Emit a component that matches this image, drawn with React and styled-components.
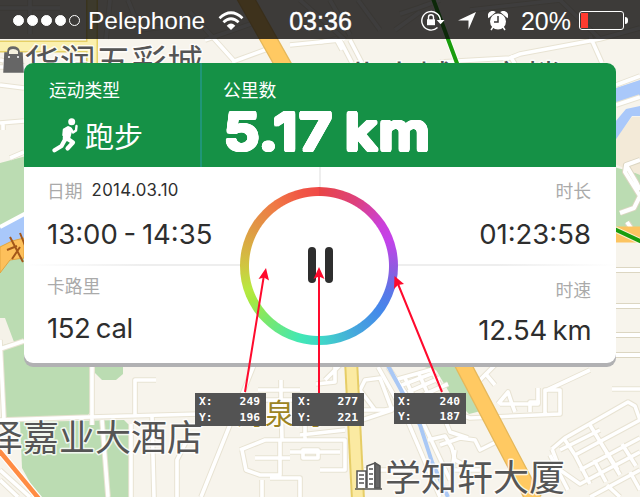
import React from "react";
import styled, { createGlobalStyle } from "styled-components";

const LATIN = `Inter, "Noto Sans CJK SC", sans-serif`;
const CJK = `"Noto Sans CJK SC", sans-serif`;
const IOS = `"Liberation Sans", Arial, sans-serif`;

const GlobalStyle = createGlobalStyle`
  *, *::before, *::after { box-sizing: border-box; }
  html, body { margin: 0; padding: 0; overflow: hidden; }
`;

const Screen = styled.div`
  position: relative;
  isolation: isolate;
  width: 640px;
  height: 497px;
  overflow: hidden;
  background: #f7f4ec;
  font-family: ${LATIN};
  color: #2e2e2e;
`;

const MapCanvas = styled.svg`
  position: absolute;
  inset: 0;
  z-index: -1;
`;

/* ---------- status bar ---------- */

const StatusBar = styled.header`
  display: grid;
  grid-template-columns: 1fr auto 1fr;
  align-items: center;
  height: 39px;
  padding: 2px 12px 0 13px;
  background: rgba(10, 9, 9, 0.79);
  color: #fff;
  font-family: ${IOS};
  font-size: 24.5px;
  line-height: 36px;
`;

const StatusGroup = styled.div`
  display: flex;
  align-items: center;
  justify-content: ${(p) => (p.$end ? "flex-end" : "flex-start")};
`;

const SignalDots = styled.div`
  display: flex;
  gap: 3px;
  margin-right: 8px;
`;

const Dot = styled.i`
  width: 11px;
  height: 11px;
  border-radius: 50%;
  border: 1px solid #fff;
  background: ${(p) => (p.$on ? "#fff" : "transparent")};
`;

const Carrier = styled.span`
  margin-right: 13px;
`;

const Clock = styled.time`
  font-size: 25px;
  -webkit-text-stroke: 0.4px #fff;
`;

const Glyph = styled.svg`
  flex: none;
  margin-right: ${(p) => p.$gap || 0}px;
`;

const Percent = styled.span`
  margin-right: 8px;
  font-size: 25px;
`;

const Battery = styled.div`
  width: 45px;
  height: 19px;
  padding: 1px;
  border: 1px solid #fff;
  border-radius: 3px;
  &::before {
    content: "";
    display: block;
    width: 7px;
    height: 15px;
    background: #ff3b30;
  }
`;

const BatteryCap = styled.i`
  width: 3px;
  height: 7px;
  margin-left: 1px;
  border-radius: 0 4px 4px 0;
  background: #fff;
`;

/* ---------- workout card ---------- */

const Card = styled.main`
  position: relative;
  width: 592px;
  height: 300px;
  margin: 24px auto 0;
  border-radius: 9px;
  background: #fff;
  box-shadow: 0 4px 0 #b1b1b3;
`;

const CardHeader = styled.section`
  display: grid;
  grid-template-columns: 178px 1fr;
  height: 104px;
  border-radius: 9px 9px 0 0;
  background: #159146;
  color: #fff;
`;

const HeaderCell = styled.div`
  padding: 14.5px 0 0 ${(p) => p.$indent}px;
  border-right: ${(p) => (p.$divided ? "2px solid #1f9677" : "0")};
`;

const HeaderLabel = styled.div`
  font: 400 17.8px/22px ${CJK};
`;

const Activity = styled.div`
  display: flex;
  align-items: center;
  margin: 17.5px 0 0 3px;
`;

const ActivityName = styled.span`
  margin-left: 6px;
  font: 400 29px/36px ${CJK};
`;

/* A ring of hard shadows thickens the strokes and rounds their ends. */
const roundShadow = Array.from({ length: 24 }, (_, i) => {
  const a = (i * Math.PI) / 12;
  return `${(Math.cos(a) * 2.1).toFixed(2)}px ${(Math.sin(a) * 2.3).toFixed(2)}px 0 #fff`;
}).join(", ");

const Distance = styled.div`
  width: max-content;
  margin: 1px 0 0 1px;
  font-size: 51px;
  font-weight: 500;
  line-height: 62px;
  white-space: pre;
  word-spacing: -5px;
  letter-spacing: 1.6px;
  text-shadow: ${roundShadow};
  transform: scaleX(1.12);
  transform-origin: 0 50%;
`;

const Stats = styled.section`
  position: relative;
  display: grid;
  grid-template-columns: 1fr 1fr;
  grid-template-rows: 98px 98px;
  background:
    linear-gradient(#eee, #eee) 295px 0 / 2px 100px no-repeat,
    linear-gradient(90deg, #fff, #eee 20%, #eee 80%, #fff) 0 97px / 100% 2px no-repeat;
`;

const Stat = styled.div`
  display: flex;
  flex-direction: column;
  align-items: ${(p) => (p.$right ? "flex-end" : "flex-start")};
  padding: ${(p) => p.$top}px 25px 0 23px;
`;

const StatLabel = styled.div`
  display: flex;
  align-items: center;
  height: 22px;
  color: #aaa;
  font: 400 17.8px/22px ${CJK};
`;

const DateText = styled.span`
  margin-left: 9px;
  color: #2e2e2e;
  font: 400 16.8px/22px ${LATIN};
  letter-spacing: 0.35px;
`;

const StatValue = styled.div`
  margin-top: ${(p) => p.$gap}px;
  font-size: 27.5px;
  line-height: 34px;
  font-weight: 400;
  white-space: nowrap;
  word-spacing: -2px;
  letter-spacing: ${(p) => p.$track || 0}px;
  margin-right: ${(p) => p.$track || 0}px;
`;

const PauseButton = styled.button`
  position: absolute;
  left: 216px;
  top: 20px;
  display: flex;
  align-items: center;
  justify-content: center;
  gap: 9px;
  width: 158px;
  height: 158px;
  padding: 0 0 2px 3px;
  border: 0;
  border-radius: 50%;
  background:
    radial-gradient(circle, #fff 69.5px, transparent 70.5px),
    conic-gradient(#e84545, #dd407e 30deg, #cb40d8 56deg, #c342ea 70deg, #8f5ce0 92deg,
      #5b76e8 110deg, #4488ea 126deg, #45a8dc 152deg, #40d6c8 178deg, #42e8b4 195deg,
      #7ce86a 225deg, #a8e840 244deg, #b8e840 252deg, #d0c640 270deg, #e09845 300deg,
      #f07845 325deg, #f05845 345deg, #f04a48 360deg);
`;

const PauseBar = styled.i`
  width: 8px;
  height: 36px;
  border-radius: 4px;
  background: #2e2e2e;
`;

/* ---------- coordinate notes pinned on the canvas ---------- */

const Arrows = styled.svg`
  position: absolute;
  inset: 0;
`;

const Note = styled.dl`
  position: absolute;
  left: ${(p) => p.$x}px;
  top: 393px;
  display: grid;
  grid-template-columns: 1fr auto;
  width: ${(p) => p.$w}px;
  height: ${(p) => p.$h}px;
  margin: 0;
  padding: 1px 6px 0 ${(p) => p.$pad}px;
  background: #535353;
  color: #fff;
  font: 700 11.3px/15px "DejaVu Sans Mono", monospace;
`;

const NoteKey = styled.dt`
  margin: 0;
`;

const NoteValue = styled.dd`
  margin: 0;
`;

const streets = [
  "M0 8H60M30 0V34M110 0L106 39M128 0L140 30L200 22M190 12L235 62M205 40L262 20M232 62L270 48M0 60L24 66M0 67H5V63",
  "M290 45L340 40L352 63M300 0L345 40M330 0L350 35M358 0L380 30M350 40L362 63M400 14L418 8L440 0M395 30L420 12",
  "M320 42L336 39L342 50M440 62L510 58L520 54L600 39L640 28M590 36L602 63M510 56L515 64M560 0L600 39M470 10L560 0",
  "M0 85L24 88M0 123L24 121M3 124V130M10 158L24 152",
  "M0 349L24 341M0 340L4 420M0 420L90 417L200 414M92 360V425M135 415V380H156",
  "M102 420L108 497M131 424V497M152 416L154 497M177 497V460L188 438M256 360L201 497",
  "M0 470L30 497M0 480L18 497M210 420L245 414",
  "M335 367V382L316 384M340 365L325 380M258 390H300M281 380V400M281 395L282 440M258 400H305",
  "M240 450L265 440H345V470H320M242 450L246 470L260 475H280V440M255 458H290M270 478H300V497M262 497V480M303 450H318V458H303ZM290 452H340",
  "M345 430L300 435M305 425V440M363 410H385L395 408M362 420L392 410L380 378L365 380L360 390L375 410",
  "M378 367L405 415L440 497M388 367L418 412L450 480M364 470H410M398 379L430 370M402 385L436 372M408 392L440 378M412 400L448 384",
  "M405 378L415 400M418 372L428 394M430 368L440 385M428 440L445 436L452 448L455 460L470 468M440 445L460 438L475 440L480 450L496 442",
  "M448 410L470 418L560 414V390H545V415M500 404H538V388M498 404L508 392L512 404L515 412M545 391L590 370M485 373L495 385",
  "M495 365L480 380M530 412V402H540M445 420L450 432L468 438M500 442L512 470M510 445L540 497M455 450L452 470L480 470",
  "M612 389H640M552 449L565 438L628 402L635 406L640 420M552 449L560 470L580 484L640 452M565 440L575 455L590 484M590 425L604 448L618 470",
  "M560 450L600 430M575 455L640 420M580 470L640 438M594 460L606 482M606 452L620 475M622 444L636 466M590 497L640 470M607 485L620 497M630 472L640 490M550 455L568 490",
  "M616 85L640 76M616 105L640 97",
];

const districtRoads = ["M616 270H640", "M616 306H640", "M616 335H640", "M616 355H640", "M640 160L626 165L636 182L640 190M626 165L625 172L640 196L634 208L620 213M627 222L631 228"];

function CityMap() {
  return (
    <MapCanvas width="640" height="497" viewBox="0 0 640 497" aria-hidden="true">
      <g fill="#bbdcb2">
        <path d="M0 163L30 155V345L0 349Z" />
        <path d="M0 350L30 341V360H90V412L86 418L5 420Z" />
        <path d="M95 360H123V374L116 380H102L95 373Z" />
        <path d="M20 422L124 420L130 426V497H38L22 468Z" />
        <path d="M398 360H458L481 411L469 414L452 397L436 370Z" />
        <path d="M610 166L640 174V230H610Z" />
      </g>
      <path d="M0 318H5L14 342L0 346Z" fill="#f5f2e8" />
      <path d="M636 117H632L610 146V162L640 175V117Z" fill="#f3ead8" />
      <path d="M0 228L30 212V236L0 246Z" fill="#a9c8fa" />
      <path d="M610 90L640 80V98L610 104ZM610 128L626 109L640 106V116H632L610 148Z" fill="#a9c8fa" />
      <g fill="none" strokeLinejoin="round">
        {streets.map((d) => <path key={"c" + d} d={d} stroke="#e8e3d3" strokeWidth="5.600" />)}
        {streets.map((d) => <path key={"w" + d} d={d} stroke="#fff" strokeWidth="3.600" />)}
        {districtRoads.map((d) => <path key={"c" + d} d={d} stroke="#dcd6c2" strokeWidth="6" />)}
        {districtRoads.map((d) => <path key={"w" + d} d={d} stroke="#fff" strokeWidth="4" />)}
        <path d="M0 227L30 211" stroke="#fff" strokeWidth="4" />
        <path d="M386 362L420 425L432 462L448 497" stroke="#a9c8f5" strokeWidth="4" />
        <path d="M-2 46.500H92V0V66" stroke="#e6d067" strokeWidth="12" />
        <path d="M-2 46.500H92V0V66" stroke="#fbf0ae" strokeWidth="9" />
        <path d="M351 360L358 500" stroke="#e6cd66" strokeWidth="14" />
        <path d="M351 360L358 500" stroke="#fbeaa2" strokeWidth="10" />
        <path d="M242 -8L286 70M459 357L534 500" stroke="#e5b85b" strokeWidth="17" />
        <path d="M242 -8L286 70M459 357L534 500" stroke="#ffc962" strokeWidth="14.500" />
        <path d="M610 234.500H640" stroke="#fcc460" strokeWidth="16" />
        <path d="M432 -4L458 66M610 227L642 242" stroke="#fff" strokeOpacity="0.7" strokeWidth="6" />
        <path d="M432 -4L458 66M610 227L642 242" stroke="#199d0d" strokeWidth="4" />
        <path d="M-3 448L40 500" stroke="#fff" strokeWidth="7" />
        <path d="M-3 448L40 500" stroke="#ff8c43" strokeWidth="4.500" />
      </g>
      <path d="M0 247L12 241L24 238V258L10 260L0 273Z" fill="#fdc05b" stroke="#e3a33f" />
      <path d="M10 237L23 262M20 233L26 248M7 250L17 246M12 259L20 247" fill="none" stroke="#a3571a" strokeWidth="2" />
      <path d="M5 53H22L23 72H4ZM8 56V51Q8 47 13 47T19 51V56" fill="#666" stroke="#666" strokeWidth="1.500" />
      <path d="M9 54V51Q10 49 13 49T18 51V54Z" fill="#f5f1df" />
      <circle cx="9" cy="57" r="1" fill="#fff" /><circle cx="18" cy="57" r="1" fill="#fff" />
      <g fontFamily={CJK} fontSize="36" fill="#555" stroke="#fff" strokeOpacity="0.8" strokeWidth="3" paintOrder="stroke" strokeLinejoin="round">
        <text x="24" y="75.500" fontSize="35.800">华润五彩城</text>
        <text x="345" y="92">北小城工字楼</text>
        <text x="-13" y="451">泽嘉业大酒店</text>
        <text x="385" y="491">学知轩大厦</text>
        <text x="236" y="425" fontSize="29" fill="#9c8423">海泉湾</text>
      </g>
      <g stroke="#555" strokeWidth="1.500">
        <path d="M355 489H382M357 488V471H366V488M367 488V466L375 463V488" fill="#fff" />
        <path d="M375 463L380 466V488H375Z" fill="#666" />
        <path d="M359 475H364M359 479H364M359 483H364M369 469H373M369 474H373M369 479H373M369 484H373" />
      </g>
    </MapCanvas>
  );
}

function WifiIcon() {
  return (
    <Glyph width="26" height="20" viewBox="0 0 26 20" fill="none" stroke="#fff" strokeWidth="2.700">
      <path d="M1.500 7.200Q13 -3.700 24.500 7.200" />
      <path d="M5.400 11.300Q13 4.200 20.600 11.300" />
      <path d="M8.700 14.700Q13 10.300 17.300 14.700L13 19Z" fill="#fff" stroke="none" />
    </Glyph>
  );
}

function LockIcon() {
  return (
    <Glyph $gap={13} width="24" height="21" viewBox="0 0 24 21" fill="none" stroke="#fff">
      <path d="M16.500 17.600A9.300 9.300 0 1 1 19.400 10.500" strokeWidth="1.400" />
      <path d="M15.700 10H23.500L19.600 14.300Z" fill="#fff" stroke="none" />
      <path d="M6 9.300H14V15.200H6Z" fill="#fff" stroke="none" />
      <path d="M7.500 10V7.200A2.500 2.500 0 0 1 12.500 7.200V10" strokeWidth="1.400" />
    </Glyph>
  );
}

function RunnerIcon() {
  return (
    <svg width="27" height="35" viewBox="0 0 27 35" fill="none" stroke="#fff" strokeLinecap="round" strokeLinejoin="round">
      <circle cx="19.700" cy="3.800" r="3.500" fill="#fff" stroke="none" />
      <path d="M16.500 12L14.500 19.500" strokeWidth="7.500" />
      <path d="M16 9.500L12 11.500L11.500 17" strokeWidth="2.500" />
      <path d="M19 11L21 14.500L24 12.500L24.500 8" strokeWidth="2.400" />
      <path d="M13 21.500L9.500 28L2.500 32.300" strokeWidth="4.200" />
      <path d="M16 21L21 24.500L15.500 30.500" strokeWidth="4.200" />
    </svg>
  );
}

const notes = [
  { left: 195, w: 71, h: 33, pad: 4, x: 249, y: 196 },
  { left: 292, w: 72, h: 33, pad: 6, x: 277, y: 221 },
  { left: 394, w: 72, h: 31, pad: 4, x: 240, y: 187 },
];

export default function App() {
  return (
    <Screen>
      <GlobalStyle />
      <CityMap />
      <StatusBar>
        <StatusGroup>
          <SignalDots>
            {[1, 1, 1, 1, 0].map((on, i) => <Dot key={i} $on={on} />)}
          </SignalDots>
          <Carrier>Pelephone</Carrier>
          <WifiIcon />
        </StatusGroup>
        <Clock>03:36</Clock>
        <StatusGroup $end>
          <LockIcon />
          <Glyph $gap={12} width="18" height="18" viewBox="0 0 18 18">
            <path d="M18 0L10.500 17.500V8.500H0Z" fill="#fff" />
          </Glyph>
          <Glyph $gap={13} width="20" height="20" viewBox="0 0 20 20">
            <circle cx="10" cy="10.500" r="8" fill="#fff" />
            <path d="M.8 6A4 4 0 0 1 6.500 1.200ZM19.200 6A4 4 0 0 0 13.500 1.200ZM5 16L3 19M15 16L17 19" fill="#fff" stroke="#fff" strokeWidth="1.500" />
            <path d="M10 5V11H6" fill="none" stroke="#3a3838" strokeWidth="1.500" />
          </Glyph>
          <Percent>20%</Percent>
          <Battery />
          <BatteryCap />
        </StatusGroup>
      </StatusBar>

      <Card>
        <CardHeader>
          <HeaderCell $indent={25} $divided>
            <HeaderLabel>运动类型</HeaderLabel>
            <Activity>
              <RunnerIcon />
              <ActivityName>跑步</ActivityName>
            </Activity>
          </HeaderCell>
          <HeaderCell $indent={21}>
            <HeaderLabel>公里数</HeaderLabel>
            <Distance>5.17 km</Distance>
          </HeaderCell>
        </CardHeader>
        <Stats>
          <Stat $top={12}>
            <StatLabel>日期<DateText>2014.03.10</DateText></StatLabel>
            <StatValue $gap={15.5}>13:00 - 14:35</StatValue>
          </Stat>
          <Stat $top={12} $right>
            <StatLabel>时长</StatLabel>
            <StatValue $gap={15.5}>01:23:58</StatValue>
          </Stat>
          <Stat $top={9}>
            <StatLabel>卡路里</StatLabel>
            <StatValue $gap={15} $track={-0.4}>152 cal</StatValue>
          </Stat>
          <Stat $top={13} $right>
            <StatLabel>时速</StatLabel>
            <StatValue $gap={13} $track={-0.25}>12.54 km</StatValue>
          </Stat>
          <PauseButton aria-label="Pause">
            <PauseBar />
            <PauseBar />
          </PauseButton>
        </Stats>
      </Card>

      <Arrows width="640" height="497" viewBox="0 0 640 497" aria-hidden="true">
        <g stroke="#ff0a2d" strokeWidth="2">
          <path d="M245 392L264 275M319 393V274M442 392L398 284" />
        </g>
        <g fill="#ff0a2d">
          <path d="M266 268L258.500 279L264 277.500L269 280.500Z" />
          <path d="M319 267L313.500 279L319 276.500L324.500 279Z" />
          <path d="M394.500 276L394 289L398 285L404 284Z" />
        </g>
      </Arrows>
      {notes.map((n) => (
        <Note key={n.left} $x={n.left} $w={n.w} $h={n.h} $pad={n.pad}>
          <NoteKey>X:</NoteKey>
          <NoteValue>{n.x}</NoteValue>
          <NoteKey>Y:</NoteKey>
          <NoteValue>{n.y}</NoteValue>
        </Note>
      ))}
    </Screen>
  );
}
